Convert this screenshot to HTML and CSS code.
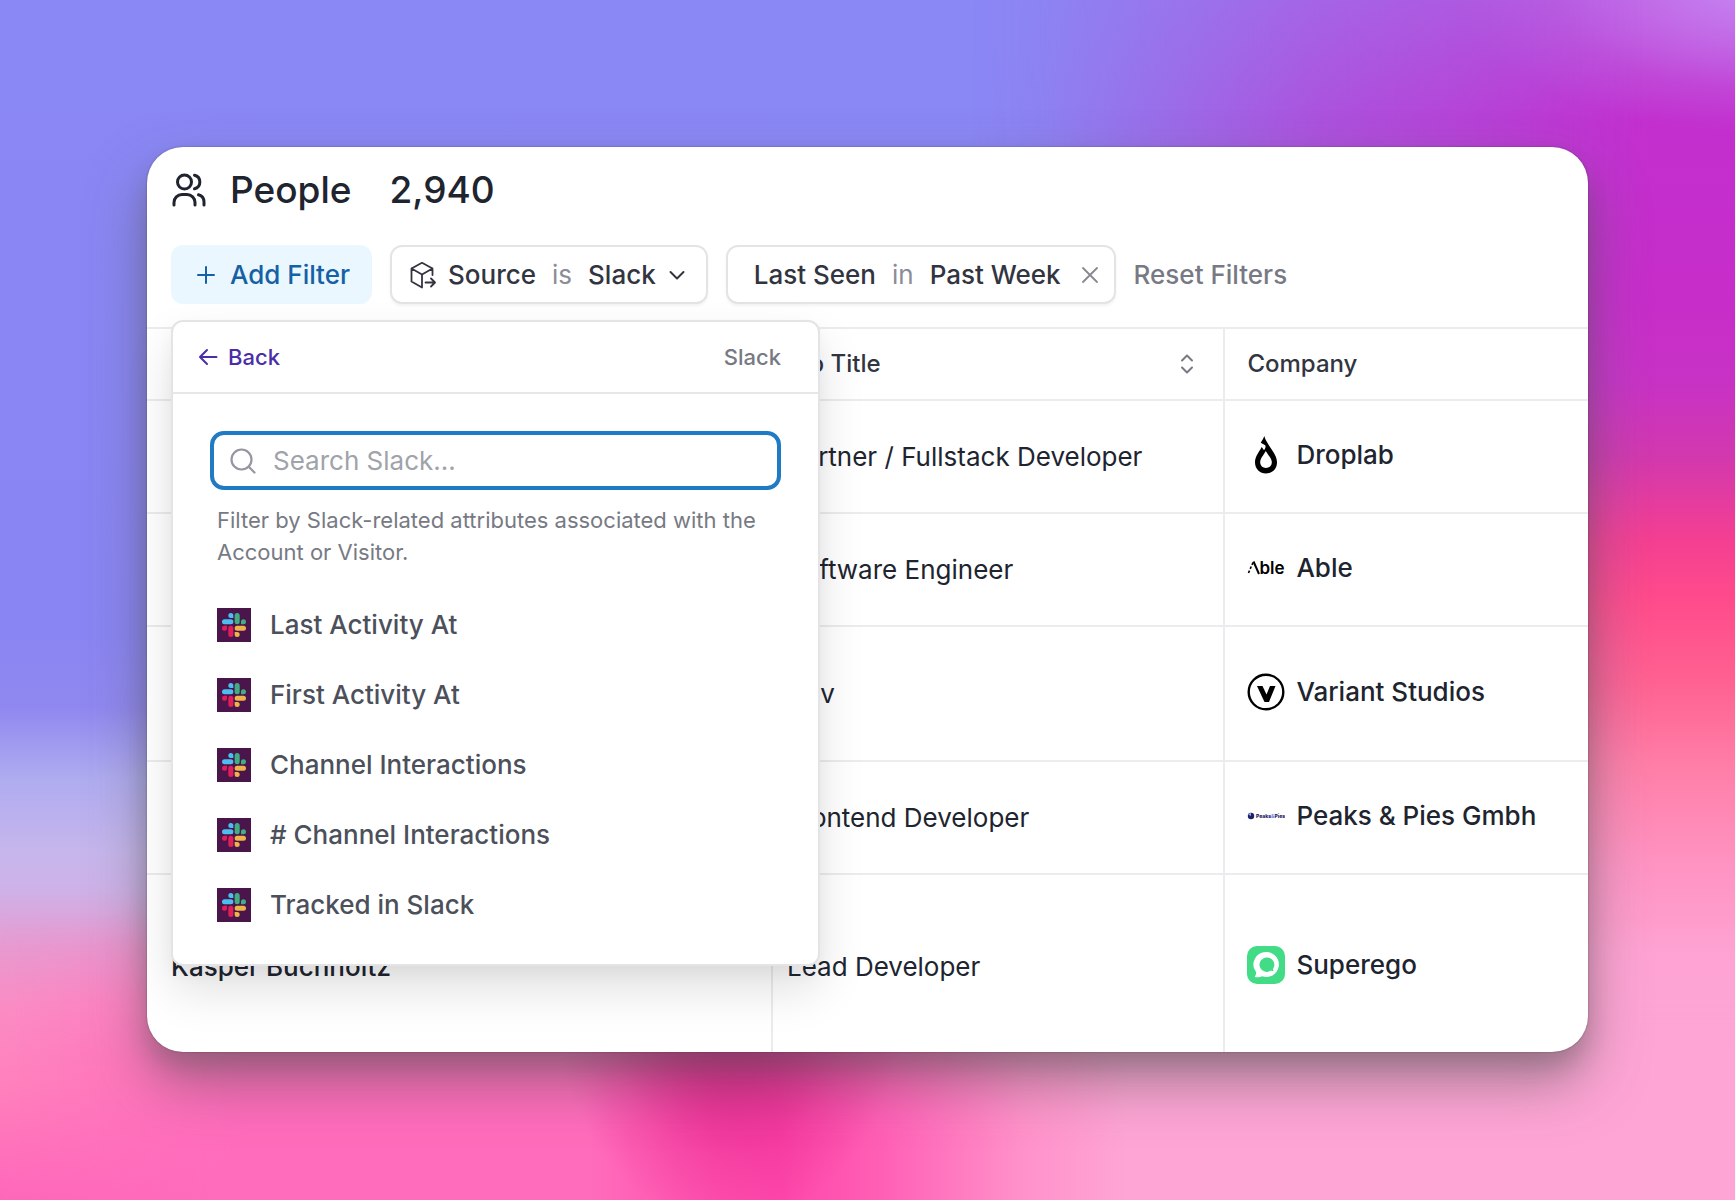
FILE: index.html
```html
<!DOCTYPE html>
<html lang="en">
<head>
<meta charset="utf-8">
<meta name="viewport" content="width=device-width, initial-scale=1">
<title>People</title>
<link rel="stylesheet" href="styles.css">
</head>
<body>
<svg class="defs" aria-hidden="true">
  <symbol id="slack" viewBox="0 0 34 34">
    <rect width="34" height="34" fill="#4a154b"/>
    <g transform="translate(5 5)">
      <path fill="#e01e5a" d="M5.042 15.165a2.528 2.528 0 0 1-2.52 2.523A2.528 2.528 0 0 1 0 15.165a2.527 2.527 0 0 1 2.522-2.52h2.52v2.52zM6.313 15.165a2.527 2.527 0 0 1 2.521-2.52 2.527 2.527 0 0 1 2.521 2.52v6.313A2.528 2.528 0 0 1 8.834 24a2.528 2.528 0 0 1-2.521-2.522v-6.313z"/>
      <path fill="#4cbff0" d="M8.834 5.042a2.528 2.528 0 0 1-2.521-2.52A2.528 2.528 0 0 1 8.834 0a2.528 2.528 0 0 1 2.521 2.522v2.52H8.834zM8.834 6.313a2.528 2.528 0 0 1 2.521 2.521 2.528 2.528 0 0 1-2.521 2.521H2.522A2.528 2.528 0 0 1 0 8.834a2.528 2.528 0 0 1 2.522-2.521h6.312z"/>
      <path fill="#3faf83" d="M18.956 8.834a2.528 2.528 0 0 1 2.522-2.521A2.528 2.528 0 0 1 24 8.834a2.528 2.528 0 0 1-2.522 2.521h-2.522V8.834zM17.688 8.834a2.528 2.528 0 0 1-2.523 2.521 2.527 2.527 0 0 1-2.52-2.521V2.522A2.527 2.527 0 0 1 15.165 0a2.528 2.528 0 0 1 2.523 2.522v6.312z"/>
      <path fill="#eeb44a" d="M15.165 18.956a2.528 2.528 0 0 1 2.523 2.522A2.528 2.528 0 0 1 15.165 24a2.527 2.527 0 0 1-2.52-2.522v-2.522h2.52zM15.165 17.688a2.527 2.527 0 0 1-2.52-2.523 2.526 2.526 0 0 1 2.52-2.52h6.313A2.527 2.527 0 0 1 24 15.165a2.528 2.528 0 0 1-2.522 2.523h-6.313z"/>
    </g>
  </symbol>
</svg>
<main class="stage">
  <section class="card">
    <header class="top">
      <div class="heading">
        <svg class="heading-icon" viewBox="0 0 36 36" fill="none" stroke="currentColor" stroke-width="3" stroke-linecap="round" aria-hidden="true">
          <circle cx="13.500" cy="10" r="7"/>
          <path d="M23.500 3.200a7 7 0 0 1 0 13.600M3 33v-2.500a8 8 0 0 1 8-8h5a8 8 0 0 1 8 8V33M27.500 22.800a7.500 7.500 0 0 1 5.500 7.200v3"/>
        </svg>
        <h1 class="title">People</h1>
        <span class="count">2,940</span>
      </div>
      <div class="filters">
        <button class="add" type="button">
          <svg class="icon-sm" viewBox="0 0 20 20" fill="none" stroke="currentColor" stroke-width="2" stroke-linecap="round" aria-hidden="true"><path d="M10 2v16M2 10h16"/></svg>
          Add Filter
        </button>
        <button class="chip chip-source" type="button">
          <svg class="icon-box" viewBox="0 0 28 28" fill="none" stroke="currentColor" stroke-width="1.800" stroke-linejoin="round" stroke-linecap="round" aria-hidden="true">
            <path d="M13 26.500 2.500 20.500v-13L13 1.800l10.500 5.700v6.500M2.500 7.500 13 13.500l10.500-6M13 13.500v13M16.500 21.500h9M22 17.500l4 4-4 4"/>
          </svg>
          <span>Source</span><span class="op">is</span><span>Slack</span>
          <svg class="chevron" viewBox="0 0 18 18" fill="none" stroke="currentColor" stroke-width="2" stroke-linecap="round" stroke-linejoin="round" aria-hidden="true"><path d="m2.500 6 6.500 6.500L15.500 6"/></svg>
        </button>
        <div class="chip chip-seen">
          <span>Last Seen</span><span class="op">in</span><span>Past Week</span>
          <button class="clear" type="button" aria-label="Remove filter">
            <svg class="icon-x" viewBox="0 0 18 18" fill="none" stroke="currentColor" stroke-width="1.800" stroke-linecap="round" aria-hidden="true"><path d="m2 2 14 14M16 2 2 16"/></svg>
          </button>
        </div>
        <button class="reset" type="button">Reset Filters</button>

        <div class="menu">
          <div class="menu-head">
            <button class="back" type="button">
              <svg class="icon-sm" viewBox="0 0 20 20" fill="none" stroke="currentColor" stroke-width="2" stroke-linecap="round" stroke-linejoin="round" aria-hidden="true"><path d="M18.500 10H2M9 3l-7 7 7 7"/></svg>
              Back
            </button>
            <span class="menu-name">Slack</span>
          </div>
          <div class="menu-body">
            <div class="search">
              <svg class="search-icon" viewBox="0 0 28 28" fill="none" stroke="currentColor" stroke-width="2.200" stroke-linecap="round" aria-hidden="true"><circle cx="12.500" cy="12.500" r="10"/><path d="m20 20 5.500 5.500"/></svg>
              <input class="search-input" type="text" placeholder="Search Slack..." aria-label="Search Slack">
            </div>
            <p class="hint">Filter by Slack-related attributes associated with the Account or Visitor.</p>
            <ul class="options">
              <li><button class="option" type="button"><svg class="slack" aria-hidden="true"><use href="#slack"/></svg>Last Activity At</button></li>
              <li><button class="option" type="button"><svg class="slack" aria-hidden="true"><use href="#slack"/></svg>First Activity At</button></li>
              <li><button class="option" type="button"><svg class="slack" aria-hidden="true"><use href="#slack"/></svg>Channel Interactions</button></li>
              <li><button class="option" type="button"><svg class="slack" aria-hidden="true"><use href="#slack"/></svg># Channel Interactions</button></li>
              <li><button class="option" type="button"><svg class="slack" aria-hidden="true"><use href="#slack"/></svg>Tracked in Slack</button></li>
            </ul>
          </div>
        </div>
      </div>
    </header>

    <table class="people">
      <colgroup><col class="col-name"><col class="col-job"><col class="col-company"></colgroup>
      <thead>
        <tr>
          <th></th>
          <th class="job-head">
            <div class="th-sort">Job Title
              <svg class="sort" viewBox="0 0 14 20" fill="none" stroke="currentColor" stroke-width="2" stroke-linecap="round" stroke-linejoin="round" aria-hidden="true"><path d="m2 6.500 5-5 5 5M2 13.500l5 5 5-5"/></svg>
            </div>
          </th>
          <th>Company</th>
        </tr>
      </thead>
      <tbody>
        <tr>
          <td></td><td>Partner / Fullstack Developer</td>
          <td><div class="company">
            <svg class="logo" viewBox="0 0 38 38" aria-hidden="true"><path fill-rule="evenodd" d="M17.300 0c.800 3.500 2.700 6.200 4.700 9.500 4 6 8 11 8 17C30 33 25 37.500 19 37.500S8 33 8 26.500c0-6 3.500-9.500 6.700-15.500l2.300 3.200c1.600-2 1.900-3.200 1.200-5L13.800 6.800C15 4.500 16.500 2.500 17.300 0zM18.800 15c-2.300 4.500-5.600 7.200-5.600 11.300 0 3.400 2.500 5.700 5.800 5.700s5.800-2.300 5.800-5.700c0-4.100-3.700-6.800-6-11.300z"/></svg>
            Droplab</div></td>
        </tr>
        <tr>
          <td></td><td>Software Engineer</td>
          <td><div class="company">
            <svg class="logo" viewBox="0 0 38 38" aria-hidden="true"><path d="M6.500 12.500 12 25" stroke="#000" stroke-width="2" fill="none"/><path d="M6 13.500.800 25.500" stroke="#000" stroke-width="1.600" stroke-dasharray="2.600 1.800" fill="none"/><text class="able" x="12.500" y="25">ble</text></svg>
            Able</div></td>
        </tr>
        <tr class="mid">
          <td></td><td>Dev</td>
          <td><div class="company">
            <svg class="logo" viewBox="0 0 38 38" aria-hidden="true"><circle cx="19" cy="19" r="17.300" fill="none" stroke="#000" stroke-width="2.400"/><path d="M10 13h5.500l4 8.500 3.500-8.500h5.500l-6.500 16h-4.500z"/></svg>
            Variant Studios</div></td>
        </tr>
        <tr>
          <td></td><td>Frontend Developer</td>
          <td><div class="company">
            <svg class="logo" viewBox="0 0 38 38" aria-hidden="true"><circle cx="4" cy="19" r="3.200" fill="#1d2266"/><path d="M1 17.500 4 19V15.500z" fill="#9aa5e8"/><text class="pies" x="9" y="21">Peaks<tspan fill="#7d8df0">&amp;</tspan>Pies</text></svg>
            Peaks &amp; Pies Gmbh</div></td>
        </tr>
        <tr class="tall">
          <td class="name">Kasper Buchholtz</td><td>Lead Developer</td>
          <td><div class="company">
            <svg class="logo" viewBox="0 0 38 38" aria-hidden="true"><rect width="38" height="38" rx="10" fill="#41dc85"/><path fill="#fff" fill-rule="evenodd" d="M19.500 6A12.500 12.500 0 1 1 15 30.200c-1.800 1-4.500 1.300-7.500.800 1.300-1.500 1.800-3 1.500-5A12.500 12.500 0 0 1 19.500 6zM19.500 11.500a7.200 7.200 0 1 0 4.500 13c1 .500 1.700.600 2.500.500-.500-.800-.600-1.500-.300-2.500A7.200 7.200 0 0 0 19.500 11.500z"/></svg>
            Superego</div></td>
        </tr>
      </tbody>
    </table>
  </section>
</main>
</body>
</html>
```
FILE: styles.css
```css
* { box-sizing: border-box; }

body {
  margin: 0;
  font-family: Inter, "Liberation Sans", sans-serif;
  font-size: 26px;
  line-height: 32px;
  color: #20242f;
}

button, input { font: inherit; color: inherit; }
button { border: 0; padding: 0; background: none; cursor: pointer; white-space: nowrap; }
svg { flex: none; display: block; }
.defs { position: absolute; width: 0; height: 0; }

/* Gradient wallpaper: left column, right column and bottom band */
.stage {
  position: relative;
  isolation: isolate;
  min-height: 100vh;
  padding: 147px 147px 148px;
  background: linear-gradient(#8a88f5 0%, #8985f2 53%, #9088f0 59%, #b0acf0 65%, #c6b6ec 71%, #cdb2e8 74%, #e89ad0 79%, #fb8cc4 84%, #ff82bd 90%, #ff6fbb 97%, #ff68ba 100%);
}
.stage::before, .stage::after {
  content: "";
  position: absolute;
  inset: 0;
  z-index: -1;
}
.stage::before {
  background:
    radial-gradient(ellipse 17% 12% at 101% -1%, #c684f2 0%, #c67ceeb0 35%, #c66fe640 70%, #c66fe600 100%),
    linear-gradient(#b84cda 0%, #c22fce 10%, #c72dc9 25%, #c832c4 32%, #d238ae 38%, #f43f92 45%, #ff4b8b 50%, #ff6292 57%, #ff7fa8 64%, #ff93c2 72%, #fea3d3 80%, #fea5d5 100%);
  -webkit-mask: linear-gradient(90deg, transparent 56%, #0001 60%, #0009 76%, #000 95%);
  mask: linear-gradient(90deg, transparent 56%, #0001 60%, #0009 76%, #000 95%);
}
.stage::after {
  background:
    radial-gradient(ellipse 10% 18% at 42% 84%, #dc1c86 0%, #dc1c86b0 35%, #dc1c8640 70%, #dc1c8600 100%),
    linear-gradient(90deg, #ff6cbb00 0%, #ff6cbb 14%, #ff6cbb 34%, #ff50ae 41%, #ff47aa 45%, #ff60b6 51%, #ff92ca 59%, #fea5d5 65%, #fea5d5 100%);
  -webkit-mask: linear-gradient(transparent 76%, #000 88%);
  mask: linear-gradient(transparent 76%, #000 88%);
}

.card {
  border-radius: 36px;
  background: #fff;
  box-shadow: 0 0 2px #0005, 0 30px 56px #50505080, 0 14px 20px #50505038;
}

.top { padding: 21px 24px 23px; }
.heading { display: flex; align-items: center; height: 44px; }
.heading-icon { width: 36px; height: 36px; }
.title, .count { margin: 0; font-size: 37px; line-height: 44px; font-weight: 500; }
.title { margin-left: 23px; }
.count { margin-left: 38px; }

.filters {
  position: relative;
  display: flex;
  align-items: center;
  gap: 18px;
  margin-top: 33px;
  font-weight: 500;
}
.add, .chip {
  display: flex;
  align-items: center;
  height: 59px;
  border-radius: 12px;
}
.add { gap: 14px; padding: 0 22px 0 25px; background: #eaf7ff; color: #1660a5; }
.icon-sm { width: 20px; height: 20px; }
.chip { border: 2px solid #e4e4e7; background: #fff; box-shadow: 0 2px 3px #0000000d; color: #32353f; white-space: nowrap; }
.chip-source { padding: 0 20px 0 17px; }
.chip-seen { padding: 0 15px 0 26px; }
.op { margin: 0 16px; color: #8a8d96; font-weight: 400; }
.icon-box { width: 28px; height: 28px; margin-right: 11px; }
.chevron { width: 18px; height: 18px; margin-left: 12px; }
.icon-x { width: 18px; height: 18px; }
.clear { margin-left: 20px; color: #85888f; }
.reset { color: #777a83; }

.menu {
  position: absolute;
  top: calc(100% + 16px);
  left: 0;
  z-index: 1;
  width: 649px;
  border: 2px solid #e4e4e7;
  border-radius: 12px;
  background: #fff;
  box-shadow: 0 24px 48px #0000001f, 0 8px 16px #0000000a;
}
.menu-head {
  display: flex;
  align-items: center;
  justify-content: space-between;
  height: 72px;
  padding: 0 37px 0 25px;
  border-bottom: 2px solid #e7e7ea;
  font-size: 22px;
}
.back { display: flex; align-items: center; gap: 10px; color: #4a2ea8; }
.menu-name { color: #777a83; }
.menu-body { padding: 37px 37px 24px; }
.search {
  display: flex;
  align-items: center;
  gap: 16px;
  height: 59px;
  padding: 0 15px;
  border: 4px solid #1f7cc4;
  border-radius: 14px;
}
.search-icon { width: 28px; height: 28px; color: #94979f; }
.search-input { flex: 1; min-width: 0; padding: 0; border: 0; outline: 0; background: none; font-weight: 400; }
.search-input::placeholder { color: #a0a3aa; opacity: 1; }
.hint { margin: 14px 7px 22px; font-size: 22px; line-height: 32px; font-weight: 400; color: #777a83; }
.options { margin: 0; padding: 0; list-style: none; }
.option { display: flex; align-items: center; gap: 19px; width: 100%; height: 70px; padding: 0 7px; color: #4c505b; }
.slack { width: 34px; height: 34px; }

.people {
  width: 100%;
  table-layout: fixed;
  border-collapse: separate;
  border-spacing: 0;
  white-space: nowrap;
}
.col-name { width: 43.3%; }
.col-job { width: 31.4%; }
.people th, .people td { height: 113px; padding: 0 0 0 14px; border-top: 2px solid #ececee; text-align: left; font-weight: 400; }
.people th { height: 72px; font-size: 24px; font-weight: 500; color: #32353f; }
.people .job-head { padding-left: 8px; }
.people .mid td { height: 135px; }
.people .tall td { height: 179px; padding-top: 6px; }
.people th:first-child, .people td:first-child { padding-left: 24px; }
.people th + th, .people td + td { border-left: 2px solid #ececee; }
.people th:last-child, .people td:last-child { padding-left: 22px; font-weight: 500; }
.people .name { font-weight: 500; }
.th-sort { display: flex; align-items: center; justify-content: space-between; padding-right: 29px; }
.sort { width: 14px; height: 20px; color: #777a83; }
.company { display: flex; align-items: center; gap: 11px; padding-bottom: 4px; }
.logo { width: 38px; height: 38px; }
.able { font-size: 17px; font-weight: 600; }
.pies { font-size: 5px; font-weight: 800; fill: #1d2266; }
```
